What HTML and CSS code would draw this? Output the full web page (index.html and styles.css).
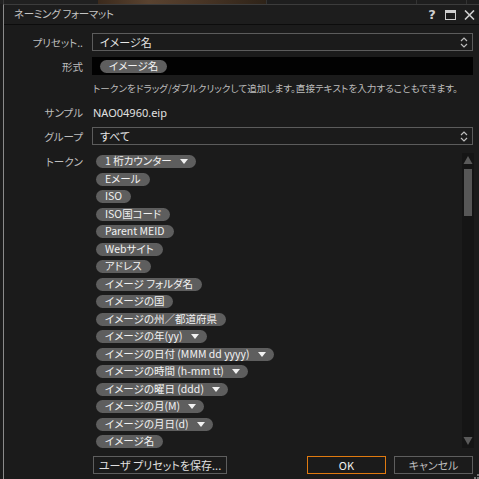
FILE: index.html
```html
<!DOCTYPE html>
<html lang="ja">
<head>
<meta charset="utf-8">
<title>ネーミング フォーマット</title>
<link rel="stylesheet" href="styles.css">
</head>
<body>
<div class="strip">
  <div class="strip-a"></div>
  <div class="strip-img"></div>
  <div class="strip-b"></div>
  <div class="strip-c"></div>
  <div class="strip-d"></div>
</div>
<div class="dialog">
  <div class="titlebar">
    <span class="title">ネーミング フォーマット</span>
    <div class="winbtns">
      <span class="wb help">?</span>
      <svg class="wb" width="11" height="10" viewBox="0 0 11 10"><rect x="0.5" y="0.5" width="10" height="9" fill="none" stroke="#cfcfcf" stroke-width="1"/><rect x="0" y="0" width="11" height="3" fill="#cfcfcf"/></svg>
      <svg class="wb" width="11" height="10" viewBox="0 0 11 10"><path d="M1 0.5 L10 9.5 M10 0.5 L1 9.5" stroke="#cfcfcf" stroke-width="1.6" fill="none"/></svg>
    </div>
  </div>
  <div class="form">
    <div class="label r-preset">プリセット..</div>
    <div class="select r-preset"><span>イメージ名</span>
      <svg class="chev" width="8" height="11" viewBox="0 0 8 11"><path d="M1 4 L4 1 L7 4 M1 7 L4 10 L7 7" stroke="#bdbdbd" stroke-width="1.2" fill="none"/></svg>
    </div>
    <div class="label r-format">形式</div>
    <div class="formatbox r-format"><span class="pill">イメージ名</span></div>
    <div class="hint r-hint">トークンをドラッグ/ダブルクリックして追加します。直接テキストを入力することもできます。</div>
    <div class="label r-sample">サンプル</div>
    <div class="sample r-sample">NAO04960.eip</div>
    <div class="label r-group">グループ</div>
    <div class="select r-group"><span>すべて</span>
      <svg class="chev" width="8" height="11" viewBox="0 0 8 11"><path d="M1 4 L4 1 L7 4 M1 7 L4 10 L7 7" stroke="#bdbdbd" stroke-width="1.2" fill="none"/></svg>
    </div>
    <div class="label r-tokens top">トークン</div>
    <div class="tokens r-tokens">
      <div class="list">
        <span class="pill">1 桁カウンター<i class="dd"></i></span>
        <span class="pill">Eメール</span>
        <span class="pill">ISO</span>
        <span class="pill">ISO国コード</span>
        <span class="pill">Parent MEID</span>
        <span class="pill">Webサイト</span>
        <span class="pill">アドレス</span>
        <span class="pill">イメージ フォルダ名</span>
        <span class="pill">イメージの国</span>
        <span class="pill">イメージの州／都道府県</span>
        <span class="pill">イメージの年(yy)<i class="dd"></i></span>
        <span class="pill">イメージの日付 (MMM dd yyyy)<i class="dd"></i></span>
        <span class="pill">イメージの時間 (h-mm tt)<i class="dd"></i></span>
        <span class="pill">イメージの曜日 (ddd)<i class="dd"></i></span>
        <span class="pill">イメージの月(M)<i class="dd"></i></span>
        <span class="pill">イメージの月日(d)<i class="dd"></i></span>
        <span class="pill">イメージ名</span>
      </div>
      <div class="scrollbar">
        <svg width="10" height="10" viewBox="0 0 10 10"><path d="M0.5 9 L5 1 L9.5 9 Z" fill="#5a5a5a"/></svg>
        <div class="thumb"></div>
        <div class="track"></div>
        <svg width="10" height="10" viewBox="0 0 10 10"><path d="M0.5 1 L5 9 L9.5 1 Z" fill="#5a5a5a"/></svg>
      </div>
    </div>
    <div class="buttons r-buttons">
      <button class="btn save">ユーザ プリセットを保存...</button>
      <span class="spacer"></span>
      <button class="btn ok">OK</button>
      <button class="btn cancel">キャンセル</button>
    </div>
  </div>
  <div class="grip"></div>
</div>
</body>
</html>
```

FILE: styles.css
```css
* { box-sizing: border-box; }
html, body {
  margin: 0;
  padding: 0;
  width: 479px;
  height: 479px;
  overflow: hidden;
  background: #1b1b1b;
  font-family: "Noto Sans CJK JP", "Noto Sans", sans-serif;
  font-feature-settings: "palt";
  color: #d0d0d0;
}
.strip {
  height: 4px;
  display: flex;
  background: #222;
}
.strip-a { width: 95px; background: #202020; border-left: 1px solid #3a3a3a; margin-left: 3px; }
.strip-img { width: 168px; background: linear-gradient(90deg, #3b2a1c, #5a4330 30%, #4a3626 60%, #2e2318); }
.strip-b { width: 150px; background: #1e1e1e; border-left: 1px solid #333; }
.strip-c { width: 50px; background: #1e1e1e; border-left: 1px solid #333; }
.strip-d { flex: 1; background: #1e1e1e; border-left: 1px solid #333; }

.dialog {
  position: relative;
  height: 475px;
  margin-left: 3px;
  border-left: 1px solid #8a8a8a;
  border-top: 1px solid #3c3c3c;
  background: #1b1b1b;
}
.titlebar {
  height: 20px;
  display: flex;
  align-items: center;
  padding-left: 10px;
  border-bottom: 1px solid #0c0c0c;
  background: #1d1d1d;
}
.title {
  font-size: 10.5px;
  letter-spacing: -0.3px;
  color: #c4c4c4;
  line-height: 1;
}
.winbtns {
  margin-left: auto;
  display: flex;
  align-items: center;
  gap: 8px;
  padding-right: 4px;
}
.wb { display: block; }
.help {
  font-family: "DejaVu Sans", sans-serif;
  font-weight: bold;
  font-size: 13px;
  color: #cfcfcf;
  line-height: 10px;
  width: 10px;
  text-align: center;
}

.form {
  display: grid;
  grid-template-columns: 79px 1fr;
  column-gap: 9px;
  padding-right: 6px;
}
.label {
  grid-column: 1;
  text-align: right;
  font-size: 10.5px;
  color: #bdbdbd;
  display: flex;
  align-items: center;
  justify-content: flex-end;
}
.label.top { align-items: flex-start; padding-top: 1px; }
.r-preset { margin-top: 8px; height: 18px; }
.r-format { margin-top: 6px; height: 18px; }
.r-hint { margin-top: 7px; height: 12px; }
.r-sample { margin-top: 12px; height: 12px; }
.r-group { margin-top: 9px; height: 18px; }
.r-tokens { margin-top: 8px; height: 295px; }
.r-buttons { margin-top: 8px; height: 18px; }

.select {
  grid-column: 2;
  border: 1px solid #5c5c5c;
  display: flex;
  align-items: center;
  padding-left: 7px;
  padding-right: 4px;
  font-size: 11px;
  color: #e6e6e6;
}
.select .chev { margin-left: auto; }
.formatbox {
  grid-column: 2;
  background: #020202;
  display: flex;
  align-items: center;
  padding-left: 8px;
}
.hint {
  grid-column: 2;
  font-size: 9.6px;
  color: #bdbdbd;
  display: flex;
  align-items: center;
  padding-left: 1px;
  white-space: nowrap;
}
.sample {
  grid-column: 2;
  font-family: "Noto Sans", sans-serif;
  font-size: 11px;
  color: #e0e0e0;
  display: flex;
  align-items: center;
  padding-left: 1px;
}
.pill {
  display: inline-flex;
  align-items: center;
  height: 13px;
  border-radius: 7px;
  background: #5e5e5e;
  color: #f2f2f2;
  font-size: 10.5px;
  padding: 0 9px 0 9px;
  white-space: nowrap;
  line-height: 1;
}
.dd {
  display: inline-block;
  width: 0;
  height: 0;
  margin-left: 8px;
  margin-right: -1px;
  border-left: 4px solid transparent;
  border-right: 4px solid transparent;
  border-top: 5px solid #f2f2f2;
}
.tokens {
  grid-column: 2;
  display: flex;
}
.list {
  flex: 1;
  display: flex;
  flex-direction: column;
  align-items: flex-start;
  gap: 4.5px;
  padding-top: 2px;
  padding-left: 4px;
  overflow: hidden;
}
.scrollbar {
  width: 12px;
  background: #151515;
  display: flex;
  flex-direction: column;
  align-items: center;
  padding: 2px 0 2px;
  margin-right: -1px;
}
.scrollbar svg { display: block; }
.thumb {
  width: 8px;
  height: 47px;
  margin-top: 4px;
  background: #575757;
}
.track { flex: 1; }
.buttons {
  grid-column: 1 / 3;
  display: flex;
  padding-left: 89px;
  gap: 8px;
}
.spacer { flex: 1; }
.btn {
  font-family: "Noto Sans CJK JP", "Noto Sans", sans-serif;
  font-feature-settings: "palt";
  background: #1b1b1b;
  border: 1px solid #5e5e5e;
  color: #e0e0e0;
  font-size: 11px;
  padding: 0;
  height: 18px;
  line-height: 1;
}
.save { width: 134px; }
.ok { width: 79px; border-color: #e07a10; color: #f0f0f0; margin-right: 0; }
.cancel { width: 79px; color: #bdbdbd; }
.grip {
  position: absolute;
  right: 0;
  bottom: 0;
  width: 5px;
  height: 5px;
  background:
    radial-gradient(circle at 1px 4px, #777 0.8px, transparent 1px),
    radial-gradient(circle at 4px 4px, #777 0.8px, transparent 1px),
    radial-gradient(circle at 4px 1px, #777 0.8px, transparent 1px);
}
```
